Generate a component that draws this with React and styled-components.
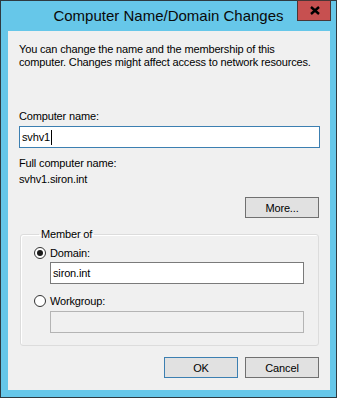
import React from "react";
import styled, { createGlobalStyle } from "styled-components";

const GlobalStyle = createGlobalStyle`
    body {
        margin: 0;
        font-family: "Liberation Sans", Arial, sans-serif;
        font-size: 11px;
        letter-spacing: -0.15px;
        color: #000;
    }
`;

const Window = styled.div`
    width: 337px;
    height: 398px;
    box-sizing: border-box;
    background: #66c7e9;
    border: 1px solid #2e3a40;
    display: flex;
    flex-direction: column;
`;

const TitleBar = styled.div`
    height: 30px;
    display: grid;
    grid-template-columns: 1fr auto 1fr;
    align-items: start;
`;

const Title = styled.div`
    grid-column: 2;
    margin-top: 6px;
    font-size: 15px;
    letter-spacing: 0;
    line-height: 18px;
    color: #0a0a0a;
    white-space: nowrap;
`;

const CloseButton = styled.div`
    grid-column: 3;
    justify-self: end;
    margin: -1px 5px 0 0;
    width: 34px;
    height: 21px;
    box-sizing: border-box;
    background: #c75050;
    border: 1px solid #4a3636;
    display: flex;
    align-items: center;
    justify-content: center;
    padding-left: 2px;
`;

const Client = styled.div`
    flex: 1;
    margin: 0 6px 7px 7px;
    background: #f0f0f0;
    padding: 12px 10px 0 11px;
    display: flex;
    flex-direction: column;
`;

const Text = styled.div`
    line-height: 13px;
    white-space: nowrap;
    margin-top: ${p => p.$top || 0}px;
`;

const TextBox = styled.div`
    height: 22px;
    box-sizing: border-box;
    border: 1px solid ${p => p.$focused ? "#3c7fb1" : p.$disabled ? "#b4b4b4" : "#7a7a7a"};
    background: ${p => p.$disabled ? "#f0f0f0" : "#fff"};
    margin: ${p => p.$margin || "0"};
    padding: 0 2px;
    display: flex;
    align-items: center;
    line-height: 14px;
`;

const Caret = styled.span`
    display: inline-block;
    width: 1px;
    height: 15px;
    margin-left: 1px;
    background: #000;
`;

const ButtonRow = styled.div`
    display: flex;
    justify-content: flex-end;
    gap: 7px;
    margin: ${p => p.$margin || "0"};
    padding-right: 1px;
`;

const Button = styled.div`
    width: 74px;
    height: 21px;
    box-sizing: border-box;
    background: #e1e1e1;
    border: 1px solid ${p => p.$default ? "#3c7fb1" : "#707070"};
    display: flex;
    align-items: center;
    justify-content: center;
    color: #000;
`;

const Group = styled.fieldset`
    margin: 10px 1px 0 1px;
    padding: 5px 14px 12px 13px;
    border: 1px solid #dcdcdc;
    border-radius: 3px;
    box-shadow: inset 1px 1px 0 #fff;
    min-width: 0;

    legend {
        margin-left: 5px;
        padding: 0 2px;
        line-height: 13px;
    }
`;

const RadioRow = styled.label`
    display: flex;
    align-items: center;
    gap: 4px;
    height: 14px;
    margin-top: ${p => p.$top || 0}px;
`;

const Radio = styled.span`
    width: 12px;
    height: 12px;
    box-sizing: border-box;
    border-radius: 50%;
    border: 1px solid #333;
    background: #fff;
    display: flex;
    align-items: center;
    justify-content: center;

    &::after {
        content: "";
        width: 6px;
        height: 6px;
        border-radius: 50%;
        background: ${p => p.$checked ? "#1a1a1a" : "transparent"};
    }
`;

export default function App() {
    return (
        <>
            <GlobalStyle />
            <Window>
                <TitleBar>
                    <Title>Computer Name/Domain Changes</Title>
                    <CloseButton>
                        <svg width="10" height="9" viewBox="0 0 10 9">
                            <path d="M1 1 L9 8 M9 1 L1 8" stroke="#000" strokeWidth="2.4" />
                        </svg>
                    </CloseButton>
                </TitleBar>
                <Client>
                    <Text>
                        You can change the name and the membership of this<br />
                        computer. Changes might affect access to network resources.
                    </Text>
                    <Text $top={41}>Computer name:</Text>
                    <TextBox $focused $margin="3px 0 0 0">svhv1<Caret /></TextBox>
                    <Text $top={9}>Full computer name:</Text>
                    <Text $top={3}>svhv1.siron.int</Text>
                    <ButtonRow $margin="11px 0 0 0">
                        <Button>More...</Button>
                    </ButtonRow>
                    <Group>
                        <legend>Member of</legend>
                        <RadioRow>
                            <Radio $checked />
                            Domain:
                        </RadioRow>
                        <TextBox $margin="2px 0 0 16px">siron.int</TextBox>
                        <RadioRow $top={10}>
                            <Radio />
                            Workgroup:
                        </RadioRow>
                        <TextBox $disabled $margin="3px 0 0 16px" />
                    </Group>
                    <ButtonRow $margin="11px 0 0 0">
                        <Button $default>OK</Button>
                        <Button>Cancel</Button>
                    </ButtonRow>
                </Client>
            </Window>
        </>
    );
}
